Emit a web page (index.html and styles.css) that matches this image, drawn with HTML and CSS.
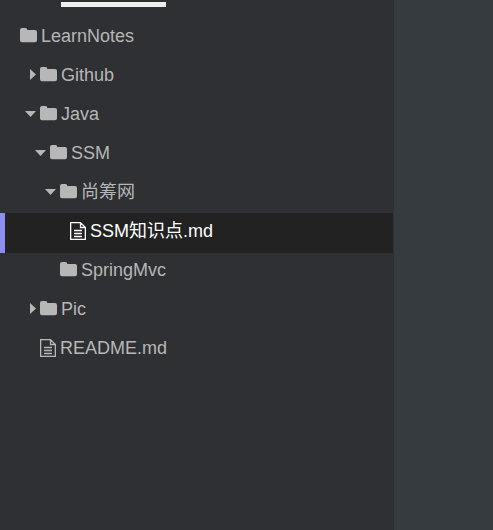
FILE: index.html
```html
<!DOCTYPE html>
<html lang="zh-CN">
<head>
<meta charset="utf-8">
<title>LearnNotes</title>
<link rel="stylesheet" href="styles.css">
</head>
<body>
<svg class="symbols" aria-hidden="true">
  <symbol id="folder" viewBox="0 0 17 16"><path d="M2 0H5.500Q7.300 0 7.300 2H15Q17 2 17 4V12.300Q17 14.300 15 14.300H2Q0 14.300 0 12.300V2Q0 0 2 0Z"/></symbol>
  <symbol id="file" viewBox="0 0 16 18"><path fill="none" stroke="currentColor" stroke-width="1.300" d="M.65.65H10.500L15.350 5.500V17.350H.65ZM10.500.65V5.500H15.350M4 8.500H12M4 11.500H12M4 14.500H12"/></symbol>
  <symbol id="closed" viewBox="0 0 15 12"><path d="M5 0L11 5.500L5 11Z"/></symbol>
  <symbol id="open" viewBox="0 0 15 12"><path d="M0 3H11L5.500 9Z"/></symbol>
</svg>
<div class="app">
  <aside class="sidebar">
    <div class="tabs"><span class="tab-indicator"></span></div>
    <nav class="tree">
      <a class="row depth-0" href="#"><span class="caret"></span><svg class="folder"><use href="#folder"/></svg><span>LearnNotes</span></a>
      <a class="row depth-1" href="#"><svg class="caret"><use href="#closed"/></svg><svg class="folder"><use href="#folder"/></svg><span>Github</span></a>
      <a class="row depth-1" href="#"><svg class="caret"><use href="#open"/></svg><svg class="folder"><use href="#folder"/></svg><span>Java</span></a>
      <a class="row depth-2" href="#"><svg class="caret"><use href="#open"/></svg><svg class="folder"><use href="#folder"/></svg><span>SSM</span></a>
      <a class="row depth-3" href="#"><svg class="caret"><use href="#open"/></svg><svg class="folder"><use href="#folder"/></svg><span>尚筹网</span></a>
      <a class="row depth-4 active" href="#" aria-current="page"><span class="caret"></span><svg class="file"><use href="#file"/></svg><span>SSM知识点.md</span></a>
      <a class="row depth-3" href="#"><span class="caret"></span><svg class="folder"><use href="#folder"/></svg><span>SpringMvc</span></a>
      <a class="row depth-1" href="#"><svg class="caret"><use href="#closed"/></svg><svg class="folder"><use href="#folder"/></svg><span>Pic</span></a>
      <a class="row depth-1" href="#"><span class="caret"></span><svg class="file"><use href="#file"/></svg><span>README.md</span></a>
    </nav>
  </aside>
  <main class="editor"></main>
</div>
</body>
</html>
```
FILE: styles.css
```css
* {
  box-sizing: border-box;
}

body {
  margin: 0;
  font-family: "Liberation Sans", "Noto Sans CJK SC", sans-serif;
  font-size: 18px;
  background: #363b40;
}

.symbols {
  display: none;
}

.app {
  display: grid;
  grid-template-columns: 4fr 1fr;
  min-height: 100vh;
}

.sidebar {
  background: #2e3033;
  border-right: 1px solid #2e3033;
}

.editor {
  background: #363b3f;
}

.tabs {
  height: 18px;
  padding: 2px 0 0 61px;
}

.tab-indicator {
  display: block;
  width: 105px;
  height: 5px;
  background: #eeeeee;
}

.row {
  display: flex;
  align-items: center;
  height: 39px;
  padding-bottom: 4px;
  border-left: 5px solid transparent;
  color: #b7b7b7;
  line-height: 24px;
  text-decoration: none;
  white-space: nowrap;
}

.row svg {
  flex: none;
  fill: currentColor;
}

.row.active {
  height: 40px;
  margin-bottom: -1px;
  background: #222222;
  border-left-color: #8e8df0;
  color: #ffffff;
}

.depth-1 {
  padding-left: 20px;
}

.depth-2 {
  padding-left: 30px;
}

.depth-3 {
  padding-left: 40px;
}

.depth-4 {
  padding-left: 50px;
}

.caret {
  flex: none;
  width: 15px;
  height: 12px;
}

.folder {
  width: 17px;
  height: 16px;
  margin-right: 4px;
}

.file {
  width: 16px;
  height: 18px;
  margin-right: 4px;
}
```
